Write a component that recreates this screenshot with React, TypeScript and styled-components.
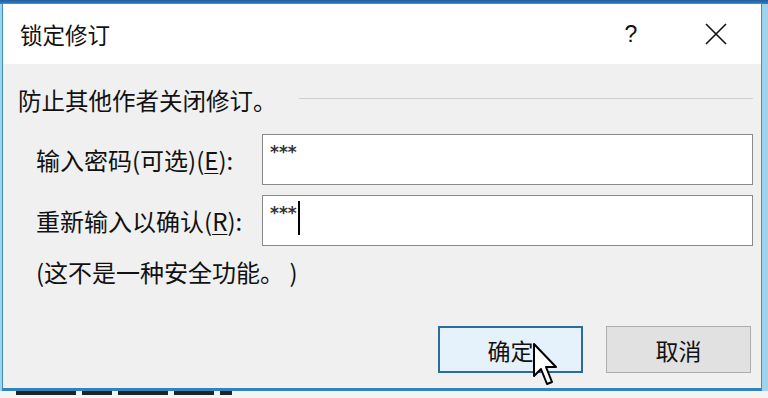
import React from 'react'
import styled, { createGlobalStyle } from 'styled-components'

const GlobalStyle = createGlobalStyle`
  html, body {
    margin: 0;
    padding: 0;
    width: 768px;
    height: 398px;
    overflow: hidden;
    background: #2a6fb0;
  }
  #root {
    width: 768px;
    height: 398px;
  }
`

const Screen = styled.div`
  width: 768px;
  height: 398px;
  display: flex;
  flex-direction: column;
  background: linear-gradient(#1f5f9e 0, #2f7fc4 4px, #9fd3ec 4px);
  font-family: "Microsoft YaHei", "Noto Sans CJK SC", "Noto Sans", sans-serif;
  color: #111;
`

const Dialog = styled.div`
  margin: 3px 6px 0 2px;
  height: 388px;
  display: flex;
  flex-direction: column;
  border: 1px solid #3b8fc9;
  border-bottom: 3px solid #2f83bf;
  box-sizing: border-box;
  background: #f0f0f0;
  position: relative;
`

const TitleBar = styled.div`
  height: 60px;
  background: #fff;
  display: flex;
  align-items: center;
  padding-left: 17px;
`

const Title = styled.div`
  font-size: 22.5px;
  flex: 1;
`

const TitleButton = styled.div<{ $shift?: number }>`
  width: 90px;
  height: 60px;
  display: flex;
  align-items: center;
  justify-content: center;
  padding-left: ${p => p.$shift ?? 0}px;
  box-sizing: border-box;
  font-family: "Liberation Sans", sans-serif;
  font-size: 23px;
`

const Body = styled.div`
  flex: 1;
  display: flex;
  flex-direction: column;
  padding: 21px 8px 0 15px;
`

const Heading = styled.div`
  display: flex;
  align-items: center;
  font-size: 23.5px;
  height: 30px;
`

const Rule = styled.div`
  flex: 1;
  height: 1px;
  background: #cfcfcf;
  margin-left: 22px;
  margin-top: -4px;
`

const Fields = styled.div`
  display: flex;
  flex-direction: column;
  gap: 10px;
  margin-top: 19px;
  padding-left: 18px;
`

const Row = styled.div`
  display: flex;
  align-items: center;
`

const Label = styled.div`
  width: 226px;
  font-size: 24px;
  u {
    text-decoration: underline;
    text-decoration-thickness: 1px;
    text-underline-offset: 3px;
  }
`

const Input = styled.div`
  flex: 1;
  height: 51px;
  box-sizing: border-box;
  background: #fff;
  border: 1px solid #8a8a8a;
  padding: 6px 0 0 7px;
  display: flex;
  align-items: flex-start;
`

const Stars = styled.span`
  font-family: "DejaVu Sans", sans-serif;
  font-size: 17px;
  font-weight: bold;
  color: #333;
  line-height: 22px;
`

const Caret = styled.span`
  width: 2px;
  height: 34px;
  background: #000;
  margin-left: 1px;
  margin-top: -1px;
`

const Note = styled.div`
  font-size: 24px;
  margin-top: 8px;
  padding-left: 18px;
  white-space: pre;
`

const Buttons = styled.div`
  margin-top: auto;
  display: flex;
  justify-content: flex-end;
  gap: 23px;
  padding-bottom: 15px;
  padding-right: 2px;
`

const Button = styled.div<{ $primary?: boolean }>`
  width: 145px;
  height: 47px;
  box-sizing: border-box;
  display: flex;
  align-items: center;
  justify-content: center;
  font-size: 23px;
  background: ${p => (p.$primary ? '#e5f1fb' : '#e1e1e1')};
  border: ${p => (p.$primary ? '2px solid #2a6d9c' : '1px solid #adadad')};
`

const Pointer = styled.svg`
  position: absolute;
  left: 529px;
  top: 338px;
`

const Behind = styled.div`
  flex: 1;
  background: #f4f4f4;
  display: flex;
  align-items: flex-start;
  gap: 6px;
  padding-left: 16px;
`

const Smudge = styled.div<{ $w: number }>`
  width: ${p => p.$w}px;
  height: 4px;
  background: #222;
`

export default function App() {
  return (
    <>
      <GlobalStyle />
      <Screen>
        <Dialog>
          <TitleBar>
            <Title>锁定修订</Title>
            <TitleButton $shift={10}>?</TitleButton>
            <TitleButton>
              <svg width="24" height="24" viewBox="0 0 24 24">
                <path d="M2 2 L22 22 M22 2 L2 22" stroke="#111" strokeWidth="1.6" fill="none" />
              </svg>
            </TitleButton>
          </TitleBar>
          <Body>
            <Heading>
              防止其他作者关闭修订。
              <Rule />
            </Heading>
            <Fields>
              <Row>
                <Label>输入密码(可选)(<u>E</u>):</Label>
                <Input>
                  <Stars>***</Stars>
                </Input>
              </Row>
              <Row>
                <Label>重新输入以确认(<u>R</u>):</Label>
                <Input>
                  <Stars>***</Stars>
                  <Caret />
                </Input>
              </Row>
            </Fields>
            <Note>{'(这不是一种安全功能。 )'}</Note>
            <Buttons>
              <Button $primary>确定</Button>
              <Button>取消</Button>
            </Buttons>
          </Body>
          <Pointer width="28" height="46" viewBox="0 0 14 23">
            <path
              d="M1 1 L1 17 L4.5 13.5 L7.5 21 L10 20 L7 12.5 L12 12.5 Z"
              fill="#fff"
              stroke="#000"
              strokeWidth="1"
              strokeLinejoin="round"
            />
          </Pointer>
        </Dialog>
        <Behind>
          <Smudge $w={60} />
          <Smudge $w={30} />
          <Smudge $w={50} />
          <Smudge $w={40} />
          <Smudge $w={12} />
        </Behind>
      </Screen>
    </>
  )
}
